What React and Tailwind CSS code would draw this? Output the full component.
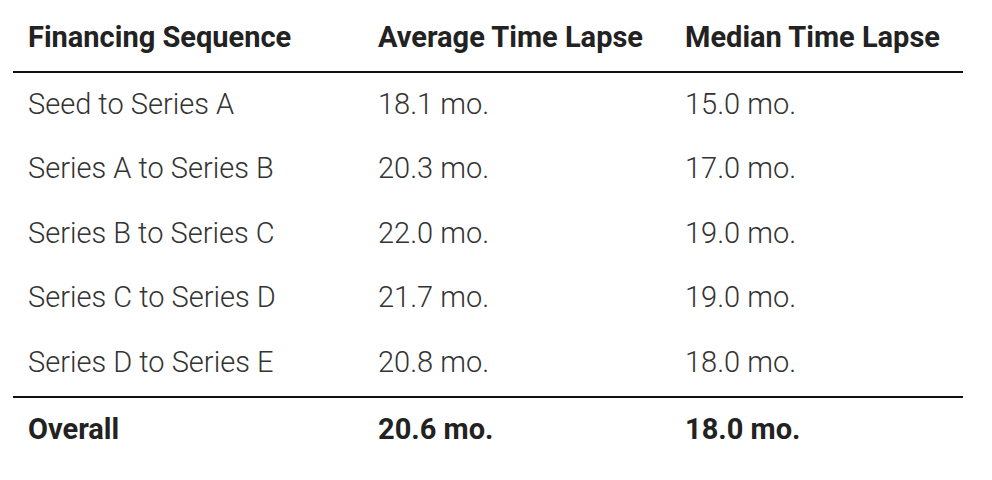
const rows = [
  ['Seed to Series A', '18.1 mo.', '15.0 mo.'],
  ['Series A to Series B', '20.3 mo.', '17.0 mo.'],
  ['Series B to Series C', '22.0 mo.', '19.0 mo.'],
  ['Series C to Series D', '21.7 mo.', '19.0 mo.'],
  ['Series D to Series E', '20.8 mo.', '18.0 mo.'],
]

export default function App() {
  return (
    <div className="w-[992px] h-[480px] bg-white pl-[13px] font-['Roboto',sans-serif]">
      <table className="w-[950px] border-collapse text-left">
        <thead>
          <tr className="h-[72px] border-b-2 border-[#111]">
            <th className="w-[350px] pl-[15px] pt-[4px] text-[29px] font-bold text-[#222]">Financing Sequence</th>
            <th className="w-[307px] pl-[15px] pt-[4px] text-[29px] font-bold text-[#222]">Average Time Lapse</th>
            <th className="pl-[15px] pt-[4px] text-[29px] font-bold text-[#222]">Median Time Lapse</th>
          </tr>
        </thead>
        <tbody>
          {rows.map((r, i) => (
            <tr key={i} className={i === rows.length - 1 ? 'h-[66.5px] border-b-2 border-[#111]' : 'h-[64.5px]'}>
              {r.map((c, j) => (
                <td key={j} className="pl-[15px] text-[29px] font-light text-[#333]">{c}</td>
              ))}
            </tr>
          ))}
          <tr className="h-[66px]">
            <td className="pl-[15px] text-[29px] font-bold text-[#222]">Overall</td>
            <td className="pl-[15px] text-[29px] font-bold text-[#222]">20.6 mo.</td>
            <td className="pl-[15px] text-[29px] font-bold text-[#222]">18.0 mo.</td>
          </tr>
        </tbody>
      </table>
    </div>
  )
}
